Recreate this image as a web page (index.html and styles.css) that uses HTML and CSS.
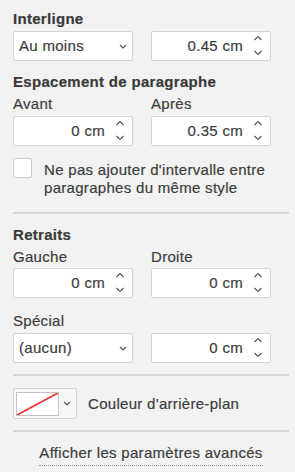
FILE: index.html
```html
<!DOCTYPE html>
<html lang="fr">
<head>
  <meta charset="UTF-8" />
  <title>Paragraphe</title>
  <link rel="stylesheet" href="styles.css">
</head>
<body>
  <div class="pane">
    <!-- Interligne -->
    <div class="heading">Interligne</div>
    <div class="row gap-sm">
      <div class="select">
        <span>Au moins</span>
        <svg class="chev" width="8" height="5" viewBox="0 0 8 5"><path d="M1 1 L4 4 L7 1" /></svg>
      </div>
      <div class="spin">
        <span>0.45 cm</span>
        <svg class="arrows" width="10" height="30" viewBox="0 0 10 30"><path d="M1.5 9 L5 5.5 L8.5 9" /><path d="M1.5 20 L5 23.5 L8.5 20" /></svg>
      </div>
    </div>

    <!-- Espacement -->
    <div class="heading gap-lg">Espacement de paragraphe</div>
    <div class="row labels">
      <span>Avant</span>
      <span>Après</span>
    </div>
    <div class="row gap-sm">
      <div class="spin">
        <span>0 cm</span>
        <svg class="arrows" width="10" height="30" viewBox="0 0 10 30"><path d="M1.5 9 L5 5.5 L8.5 9" /><path d="M1.5 20 L5 23.5 L8.5 20" /></svg>
      </div>
      <div class="spin">
        <span>0.35 cm</span>
        <svg class="arrows" width="10" height="30" viewBox="0 0 10 30"><path d="M1.5 9 L5 5.5 L8.5 9" /><path d="M1.5 20 L5 23.5 L8.5 20" /></svg>
      </div>
    </div>
    <label class="check">
      <span class="box"></span>
      <span class="check-text">Ne pas ajouter d'intervalle entre paragraphes du même style</span>
    </label>

    <hr class="sep first">

    <!-- Retraits -->
    <div class="heading gap-lg">Retraits</div>
    <div class="row labels">
      <span>Gauche</span>
      <span>Droite</span>
    </div>
    <div class="row gap-xs">
      <div class="spin">
        <span>0 cm</span>
        <svg class="arrows" width="10" height="30" viewBox="0 0 10 30"><path d="M1.5 9 L5 5.5 L8.5 9" /><path d="M1.5 20 L5 23.5 L8.5 20" /></svg>
      </div>
      <div class="spin">
        <span>0 cm</span>
        <svg class="arrows" width="10" height="30" viewBox="0 0 10 30"><path d="M1.5 9 L5 5.5 L8.5 9" /><path d="M1.5 20 L5 23.5 L8.5 20" /></svg>
      </div>
    </div>
    <div class="row labels special">
      <span>Spécial</span>
    </div>
    <div class="row gap-sm">
      <div class="select">
        <span>(aucun)</span>
        <svg class="chev" width="8" height="5" viewBox="0 0 8 5"><path d="M1 1 L4 4 L7 1" /></svg>
      </div>
      <div class="spin">
        <span>0 cm</span>
        <svg class="arrows" width="10" height="30" viewBox="0 0 10 30"><path d="M1.5 9 L5 5.5 L8.5 9" /><path d="M1.5 20 L5 23.5 L8.5 20" /></svg>
      </div>
    </div>

    <hr class="sep">

    <!-- Couleur -->
    <div class="color-row">
      <div class="color-btn">
        <span class="swatch">
          <svg width="43" height="24" viewBox="0 0 43 24"><line x1="1" y1="23" x2="42" y2="1" /></svg>
        </span>
        <svg class="chev" width="8" height="5" viewBox="0 0 8 5"><path d="M1 1 L4 4 L7 1" /></svg>
      </div>
      <span>Couleur d'arrière-plan</span>
    </div>

    <hr class="sep">

    <div class="more">
      <a href="#">Afficher les paramètres avancés</a>
    </div>
  </div>
</body>
</html>
```

FILE: styles.css
```css
* {
  margin: 0;
  padding: 0;
  box-sizing: border-box;
}

html, body {
  background: #f2f2f2;
  font-family: 'Liberation Sans', Arial, sans-serif;
  font-size: 15px;
  letter-spacing: 0.3px;
  line-height: 18px;
  color: #3d3d3d;
  -webkit-text-stroke: 0.2px #3d3d3d;
}

.pane {
  width: 295px;
  padding: 10px 6px 0 13px;
}

.heading {
  font-weight: bold;
  color: #3a3a3a;
}

.gap-lg {
  margin-top: 12px;
}

.row {
  display: grid;
  grid-template-columns: 120px 120px;
  column-gap: 18px;
}

.gap-sm {
  margin-top: 3px;
}

.gap-xs {
  margin-top: 2px;
}

.labels {
  margin-top: 4px;
}

.labels.special {
  margin-top: 14px;
}

.select,
.spin {
  height: 30px;
  background: #fff;
  border: 1px solid #d4d4d4;
  border-radius: 2px;
  display: flex;
  align-items: center;
}

.select {
  justify-content: space-between;
  padding: 0 5px 0 5px;
}

.spin {
  justify-content: flex-end;
  padding-right: 7px;
}

.spin span {
  margin-right: 10px;
}

.chev path,
.arrows path {
  fill: none;
  stroke: #555;
  stroke-width: 1.2;
}

.check {
  display: flex;
  gap: 12px;
  margin-top: 12px;
}

.box {
  flex: none;
  width: 19px;
  height: 20px;
  background: #fff;
  border: 1px solid #cdcdcd;
  border-radius: 2px;
}

.check-text {
  padding-top: 3px;
}

.sep {
  border: none;
  border-top: 2px solid #d6d6d6;
  margin-top: 11px;
}

.sep.first {
  margin-top: 15px;
}

.color-row {
  display: flex;
  align-items: center;
  gap: 11px;
  margin-top: 12px;
}

.color-btn {
  width: 64px;
  height: 31px;
  background: #f7f7f7;
  border: 1px solid #d4d4d4;
  border-radius: 2px;
  display: flex;
  align-items: center;
  padding-left: 2px;
  gap: 4px;
}

.swatch {
  width: 43px;
  height: 24px;
  background: #fff;
  border: 1px solid #c4c4c4;
  display: block;
  overflow: hidden;
}

.swatch svg {
  display: block;
  margin: -1px;
}

.swatch line {
  stroke: #f03030;
  stroke-width: 1.6;
}

.more {
  margin-top: 12px;
  text-align: center;
}

.more a {
  display: inline-block;
  color: #3d3d3d;
  text-decoration: none;
  padding-bottom: 3px;
  border-bottom: 1px dotted #999;
}
```
